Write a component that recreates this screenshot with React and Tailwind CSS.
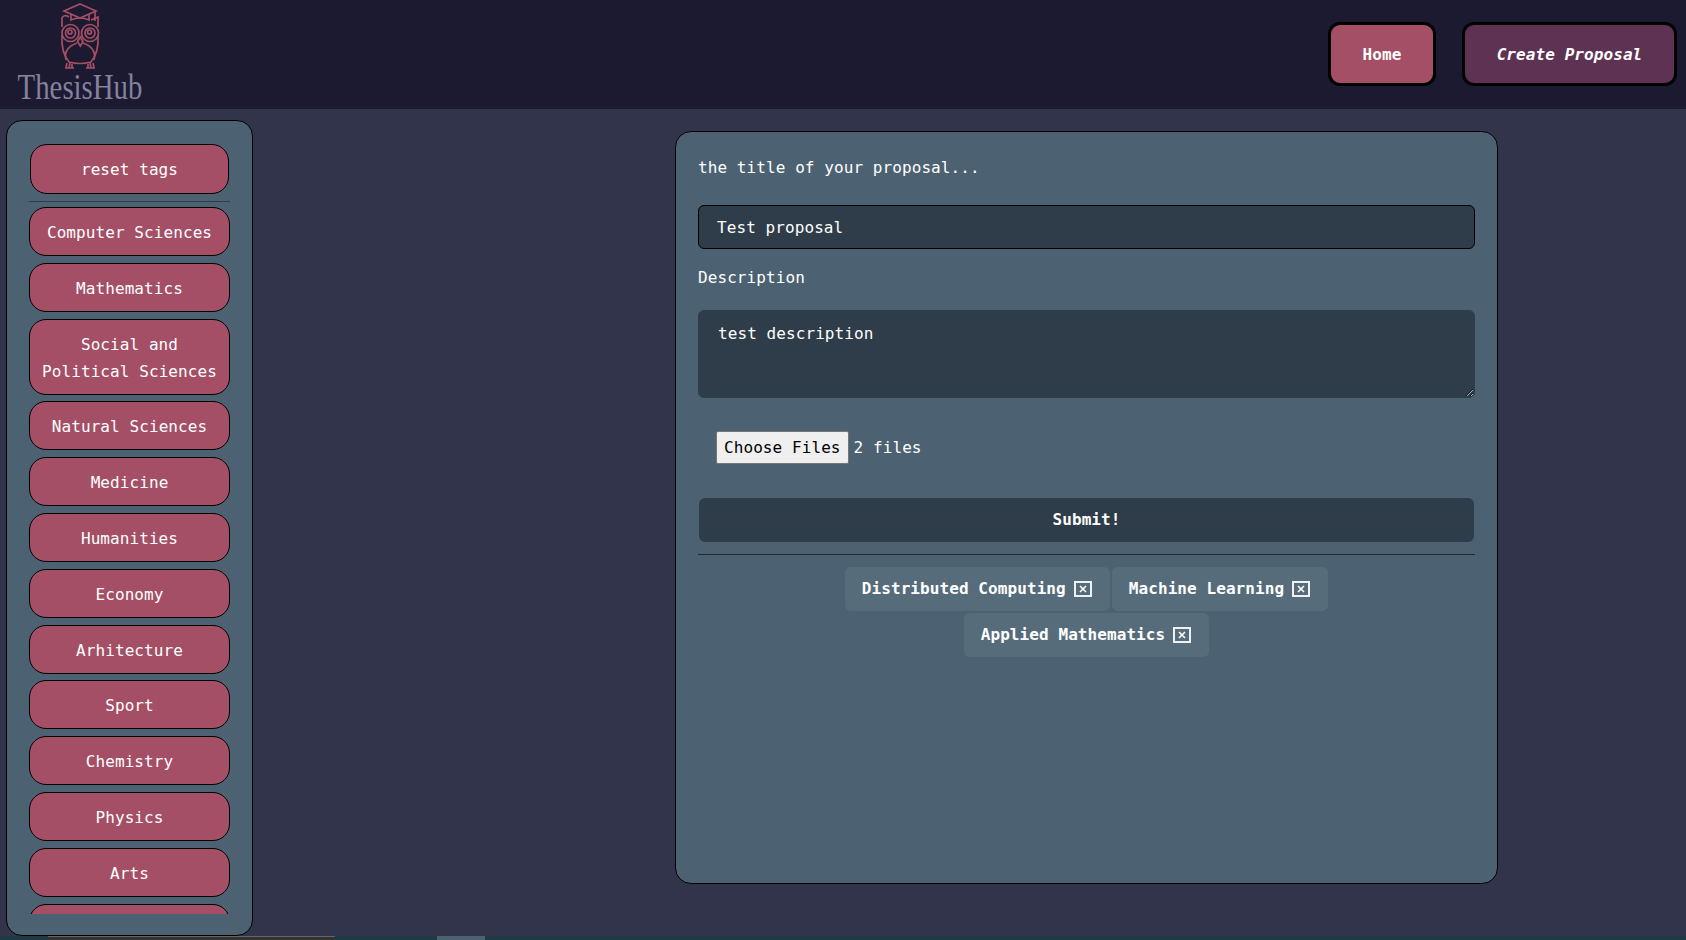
const tags = [
  "Computer Sciences",
  "Mathematics",
  "Social and Political Sciences",
  "Natural Sciences",
  "Medicine",
  "Humanities",
  "Economy",
  "Arhitecture",
  "Sport",
  "Chemistry",
  "Physics",
  "Arts",
];

const chips = ["Distributed Computing", "Machine Learning", "Applied Mathematics"];

function Owl() {
  return (
    <svg width="40" height="66" viewBox="0 0 40 66" fill="none" stroke="#a44f66" strokeWidth="1.7" className="block">
      {/* cap */}
      <path d="M20 1 L36 8 L20 15 L4 8 Z" />
      <path d="M11 11 V17 Q20 13 29 17 V11" />
      <path d="M35 9 V18" />
      {/* head and ears */}
      <path d="M9 14 Q4 11 2 15 V24 M31 17 L38 14 V24" />
      <circle cx="10.5" cy="30" r="8.5" />
      <circle cx="10.5" cy="30" r="5" />
      <circle cx="10" cy="29" r="2" />
      <circle cx="30" cy="30" r="8.5" />
      <circle cx="30" cy="30" r="5" />
      <circle cx="29.5" cy="29" r="2" />
      {/* beak */}
      <path d="M20.3 34 L17.5 38.5 L20.3 43 L23 38.5 Z" />
      {/* body and belly */}
      <path d="M2 32 Q1 50 9 59 Q20 62 31 59 Q39 50 38 32" />
      <path d="M6 57 Q3 45 17 40 M34 57 Q37 45 23 40" />
      {/* feet */}
      <path d="M6 65 L7 60 M9 65 L10 60 M12 65 V61 M5 65 H14" />
      <path d="M28 65 V61 M31 65 L30 60 M34 65 L33 60 M26 65 H35" />
    </svg>
  );
}

function TagButton({ label }) {
  return (
    <button className="w-full shrink-0 rounded-[17px] border border-black bg-[#a44f66] px-2 pt-[11px] pb-[9px] text-center leading-[27px] text-white">
      {label}
    </button>
  );
}

function Sidebar() {
  return (
    <aside className="flex h-[816px] w-[247px] flex-col rounded-[16px] border border-black bg-[#4c6272] px-[22px] pt-[23px] pb-[21px]">
      <button className="mx-[1px] shrink-0 rounded-[17px] border border-black bg-[#a44f66] px-2 py-[10.5px] leading-[27px] text-white">
        reset tags
      </button>
      <hr className="mt-[7px] mb-[5px] border-t border-[#2e3d49]" />
      <div className="flex min-h-0 flex-1 flex-col gap-[6.8px] overflow-hidden">
        {tags.map((t) => (
          <TagButton key={t} label={t} />
        ))}
        {/* next tag is scrolled out, only its top edge shows */}
        <div className="h-[49px] w-full shrink-0 rounded-[17px] border border-black bg-[#a44f66]" />
      </div>
    </aside>
  );
}

function ChipX() {
  return (
    <span className="flex h-4 w-[18px] items-center justify-center border-2 border-[#eef1f3] text-white">
      <svg width="8" height="8" viewBox="0 0 8 8" stroke="currentColor" strokeWidth="1.6">
        <path d="M1 1 L7 7 M7 1 L1 7" />
      </svg>
    </span>
  );
}

function ProposalForm() {
  return (
    <section className="flex h-[753px] w-[823px] flex-col rounded-[16px] border border-black bg-[#4c6272] px-[22px] text-white">
      <label className="mt-[24px] leading-[24px]">the title of your proposal...</label>
      <input
        readOnly
        value="Test proposal"
        className="mt-[25px] h-[44px] w-full rounded-[6px] border border-black bg-[#2e3d49] px-[18px] text-white outline-none"
      />
      <label className="mt-[17px] leading-[24px]">Description</label>
      <textarea
        readOnly
        value="test description"
        className="mt-[20px] block h-[88px] w-full rounded-[6px] border border-[#2e3d49] bg-[#2e3d49] px-[19px] pt-[11px] pb-[9px] leading-[24px] text-white outline-none"
      />
      <div className="mt-[33px] flex items-center pl-[18px]">
        <button className="h-[33px] rounded-[2px] border border-[#767676] bg-[#efefef] px-[7px] text-black">
          Choose Files
        </button>
        <span className="ml-[5px]">2 files</span>
      </div>
      <button className="mx-[1px] mt-[34px] h-[44px] rounded-[6px] bg-[#2e3d49] font-bold text-white">Submit!</button>
      <hr className="mt-[12px] border-t border-[#1f2a33]" />
      <div className="mt-[12px] flex flex-wrap justify-center gap-[2px] px-[100px]">
        {chips.map((c) => (
          <span key={c} className="flex h-[44px] items-center gap-[8px] rounded-[6px] bg-[#576c7b] pl-[17px] pr-[18px] font-bold text-white">
            {c}
            <ChipX />
          </span>
        ))}
      </div>
    </section>
  );
}

export default function App() {
  return (
    <div className="flex h-[940px] flex-col overflow-hidden bg-[#31344b] font-['DejaVu_Sans_Mono','Liberation_Mono',monospace] text-base tracking-[0.08px]">
      <header className="flex h-[109px] shrink-0 items-start justify-between bg-[#1b1a30]">
        {/* Logo */}
        <div className="ml-[17px] flex w-[126px] flex-col items-center pt-[3px]">
          <Owl />
          <span className="mt-[2px] scale-x-[0.8] font-['Liberation_Serif',serif] text-[36px] leading-[32px] tracking-normal text-[#85819f]">
            ThesisHub
          </span>
        </div>
        <nav className="mt-[22px] mr-[9px] flex gap-[26px]">
          <button className="h-[64px] w-[108px] rounded-[12px] border-[3px] border-black bg-[#a44f66] pt-[2px] font-bold text-white">
            Home
          </button>
          <button className="h-[64px] w-[215px] rounded-[12px] border-[3px] border-black bg-[#5e3253] pt-[2px] font-bold italic text-white">
            Create Proposal
          </button>
        </nav>
      </header>

      <main className="flex min-h-0 flex-1 items-start">
        <div className="ml-[6px] mt-[11px]">
          <Sidebar />
        </div>
        <div className="ml-[422px] mt-[22px]">
          <ProposalForm />
        </div>
      </main>

      {/* Cut-off strip along the bottom edge */}
      <div className="flex h-[4px] shrink-0 bg-[#1f3a44]">
        <div className="ml-[48px] w-[287px] border-t border-[#666] bg-[#333]" />
        <div className="ml-[102px] w-[48px] bg-[#4c6272]" />
      </div>
    </div>
  );
}
